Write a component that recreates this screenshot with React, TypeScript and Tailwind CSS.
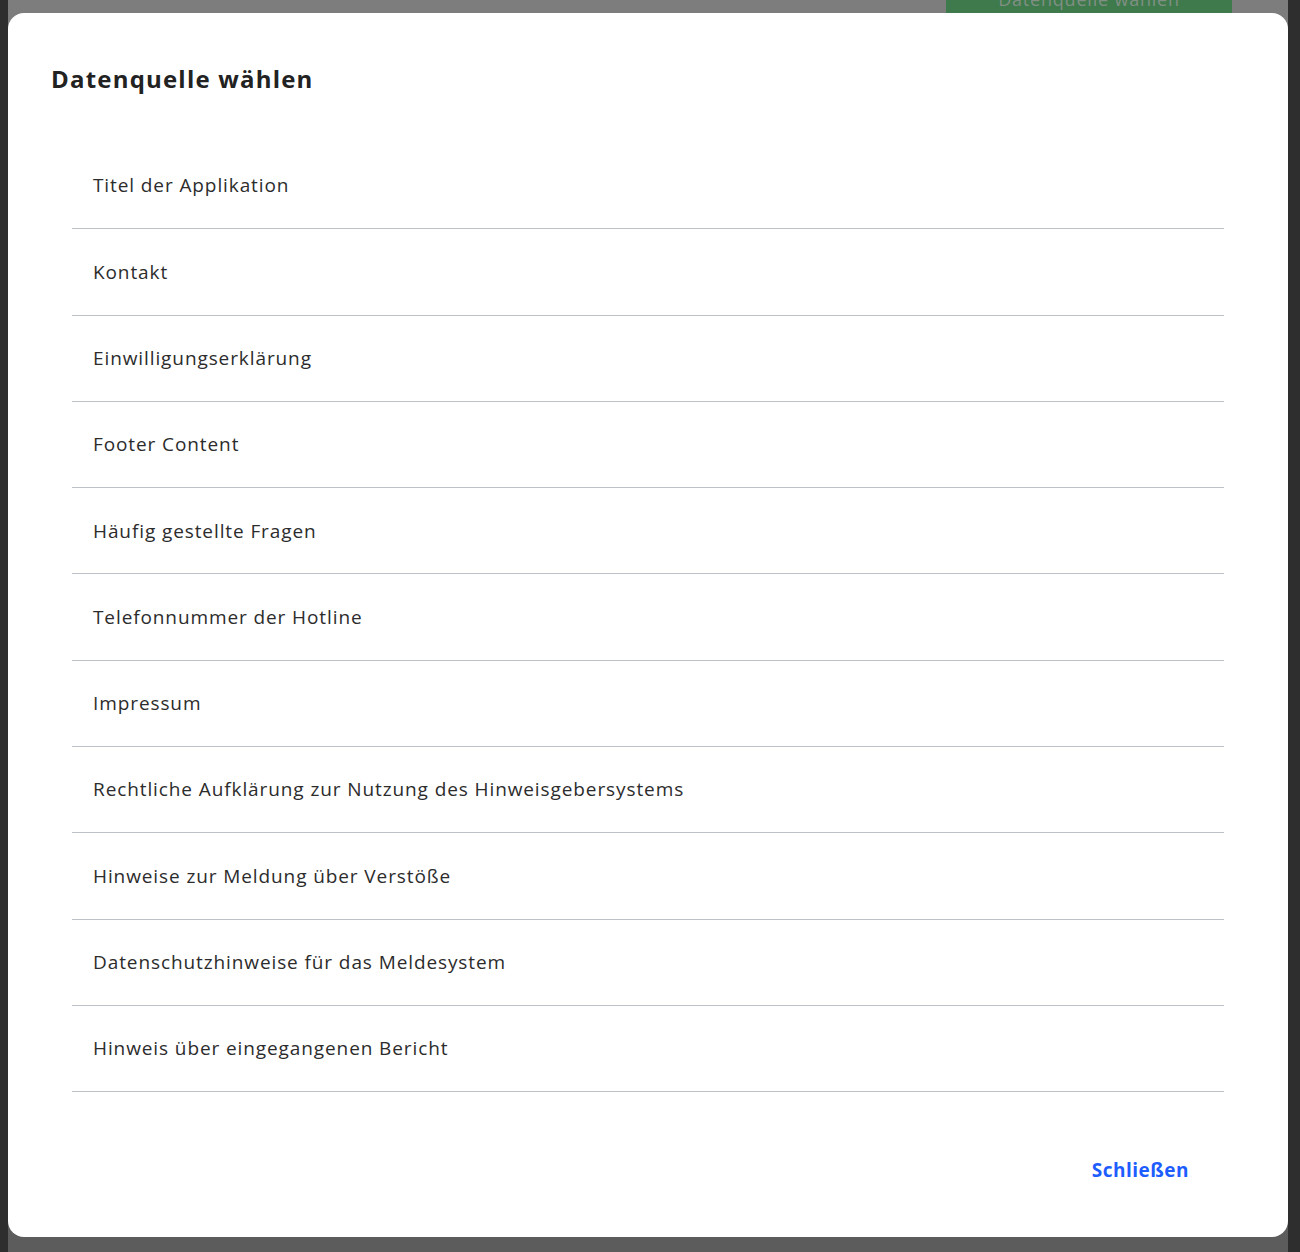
import React from 'react';

const SOURCES = [
  'Titel der Applikation',
  'Kontakt',
  'Einwilligungserklärung',
  'Footer Content',
  'Häufig gestellte Fragen',
  'Telefonnummer der Hotline',
  'Impressum',
  'Rechtliche Aufklärung zur Nutzung des Hinweisgebersystems',
  'Hinweise zur Meldung über Verstöße',
  'Datenschutzhinweise für das Meldesystem',
  'Hinweis über eingegangenen Bericht',
];

export default function App() {
  return (
    <div className="h-[1252px] w-full overflow-hidden bg-[#2e2e2e] pl-2 pr-3 font-['Open_Sans',sans-serif]">
      <div className="flex h-full flex-col bg-gradient-to-b from-[#7d7d7d] via-[#6f6f6f] to-[#5c5c5c]">
        {/* strip of the page behind the overlay */}
        <div className="relative h-[13px] shrink-0 overflow-hidden">
          <div className="absolute left-[938px] top-[-16px] flex h-[29px] w-[286px] items-center justify-center bg-[#3f7a4c] text-[18px] leading-6 tracking-[0.8px] text-[#7f8f84]">
            Datenquelle wählen
          </div>
        </div>

        {/* Dialog */}
        <div className="flex h-[1224px] shrink-0 flex-col rounded-2xl bg-white">
          <h2 className="px-[43px] pt-[50px] text-[24px] font-bold leading-8 tracking-[1.2px] text-[#222222]">
            Datenquelle wählen
          </h2>

          <ul className="mx-[64px] mt-[48px] flex flex-col">
            {SOURCES.map((s) => (
              <li
                key={s}
                className="flex h-[86.3px] cursor-pointer items-center border-b border-[#bdc1c8] pl-[21px] text-[19px] tracking-[0.9px] text-[#2c2c2c] hover:bg-gray-50"
              >
                {s}
              </li>
            ))}
          </ul>

          <div className="flex justify-end pr-[83px] pt-[56px]">
            <button className="rounded px-4 py-2 text-[19px] font-bold tracking-[0.5px] text-[#1d5cff]">
              Schließen
            </button>
          </div>
        </div>
      </div>
    </div>
  );
}
